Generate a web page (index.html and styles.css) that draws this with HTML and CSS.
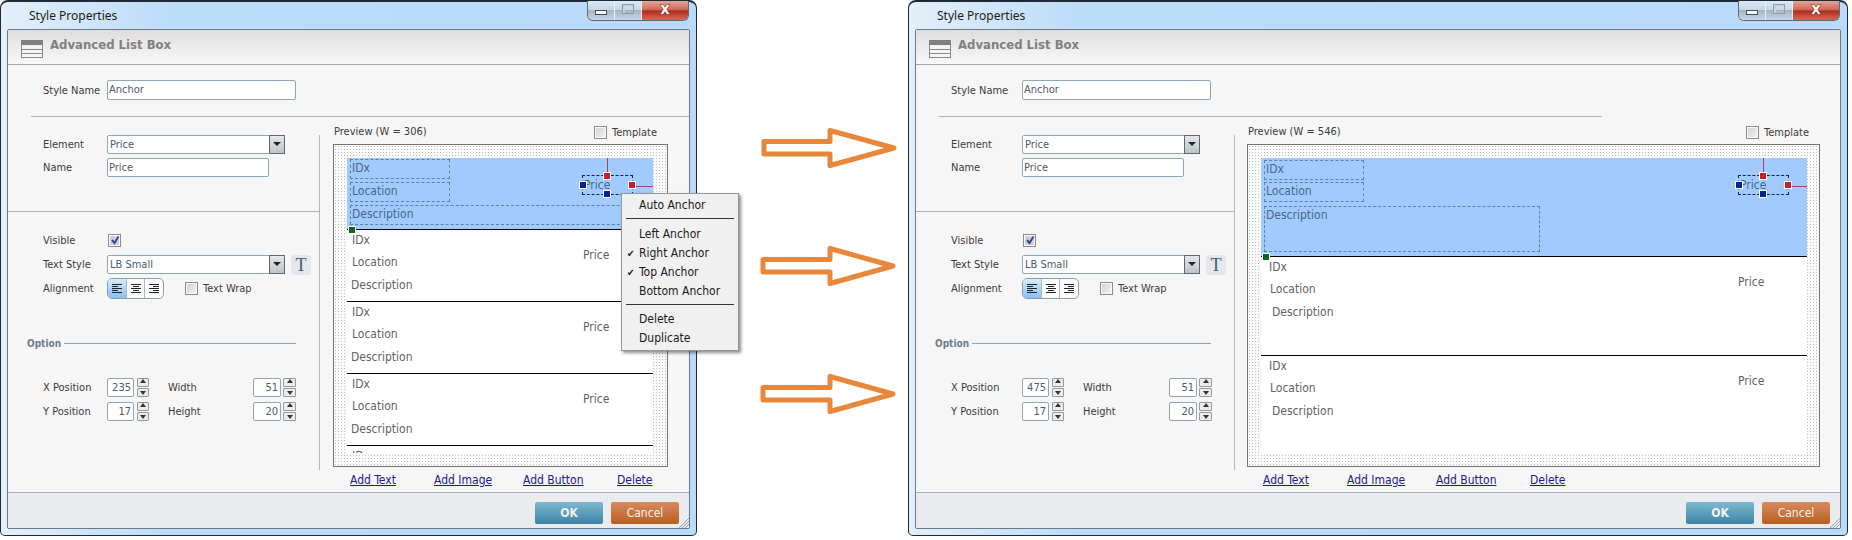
FILE: index.html
```html
<!DOCTYPE html>
<html lang="en">
<head>
    <meta charset="UTF-8">
    <title>Style Properties - Anchor</title>
    <link rel="stylesheet" href="styles.css">
</head>
<body>
    <svg class="defs" width="0" height="0">
        <symbol id="i-list" viewBox="0 0 22 18"><rect x="0.5" y="0.5" width="21" height="17" fill="#f4f4f4" stroke="#8a8a8a"/><rect x="0" y="0" width="22" height="5" fill="#808080"/><path d="M1 9.5h20M1 13.5h20" stroke="#8a8a8a"/></symbol>
        <symbol id="i-left" viewBox="0 0 12 11"><path d="M1 1.5h10M1 3.5h6M1 5.5h10M1 7.5h6M1 9.5h10" stroke="#222"/></symbol>
        <symbol id="i-center" viewBox="0 0 12 11"><path d="M1 1.5h10M3 3.5h6M1 5.5h10M3 7.5h6M1 9.5h10" stroke="#222"/></symbol>
        <symbol id="i-right" viewBox="0 0 12 11"><path d="M1 1.5h10M5 3.5h6M1 5.5h10M5 7.5h6M1 9.5h10" stroke="#222"/></symbol>
        <symbol id="i-tick" viewBox="0 0 12 12"><path d="M3 6l2.5 3L9.5 2.5" fill="none" stroke="#3a4a80" stroke-width="2"/></symbol>
        <symbol id="i-close" viewBox="0 0 12 11"><path d="M1 .5h3l2 2.6L8 .5h3L7.8 5.4 11 10.5H8L6 7.7 4 10.5H1l3.2-5.1z" fill="#fff" stroke="#7a2a20" stroke-width=".6"/></symbol>
        <symbol id="i-grip" viewBox="0 0 11 11"><path d="M1 11L11 1M4 11l7-7M7 11l4-4" stroke="#8fa3b3"/></symbol>
    </svg>

    <div class="page">
        <!-- before: preview 306 wide, context menu open -->
        <div class="window window-narrow">
            <div class="titlebar">
                <span class="title">Style Properties</span>
                <div class="caption-btns">
                    <span class="cap-btn cap-min"><i></i></span>
                    <span class="cap-btn cap-max"><i></i></span>
                    <span class="cap-btn cap-close"><svg width="12" height="11"><use href="#i-close"/></svg></span>
                </div>
            </div>
            <div class="panel">
                <div class="panel-head">
                    <svg class="head-icon" width="22" height="18"><use href="#i-list"/></svg>
                    <span class="head-text">Advanced List Box</span>
                </div>
                <div class="panel-body">
                    <div class="field style-name">
                        <label>Style Name</label>
                        <span class="input w-name">Anchor</span>
                    </div>
                    <div class="style-rule"></div>
                    <div class="columns">
                        <div class="form">
                            <div class="field">
                                <label>Element</label>
                                <span class="input select">Price<b class="drop"></b></span>
                            </div>
                            <div class="field mt4">
                                <label>Name</label>
                                <span class="input w-short">Price</span>
                            </div>
                            <div class="form-rule"></div>
                            <div class="field row-visible">
                                <label>Visible</label>
                                <span class="check checked"><svg width="12" height="12"><use href="#i-tick"/></svg></span>
                            </div>
                            <div class="field mt6">
                                <label>Text Style</label>
                                <span class="input select">LB Small<b class="drop"></b></span>
                                <span class="t-btn">T</span>
                            </div>
                            <div class="field mt4 row-align">
                                <label>Alignment</label>
                                <div class="align-group">
                                    <span class="align-seg active"><svg width="12" height="11"><use href="#i-left"/></svg></span>
                                    <span class="align-seg"><svg width="12" height="11"><use href="#i-center"/></svg></span>
                                    <span class="align-seg"><svg width="12" height="11"><use href="#i-right"/></svg></span>
                                </div>
                                <span class="check wrap-check"></span>
                                <span class="check-text">Text Wrap</span>
                            </div>
                            <div class="option">
                                <span class="option-text">Option</span>
                                <span class="option-line"></span>
                            </div>
                            <div class="field row-num">
                                <label>X Position</label>
                                <span class="input num">235</span>
                                <span class="spin"><b class="up"></b><b class="down"></b></span>
                                <label class="label-2">Width</label>
                                <span class="input num num-2">51</span>
                                <span class="spin spin-2"><b class="up"></b><b class="down"></b></span>
                            </div>
                            <div class="field mt5">
                                <label>Y Position</label>
                                <span class="input num">17</span>
                                <span class="spin"><b class="up"></b><b class="down"></b></span>
                                <label class="label-2">Height</label>
                                <span class="input num num-2">20</span>
                                <span class="spin spin-2"><b class="up"></b><b class="down"></b></span>
                            </div>
                        </div>
                        <div class="preview">
                            <div class="preview-head">
                                <span>Preview (W = 306)</span>
                                <div class="template"><span class="check"></span><span class="check-text">Template</span></div>
                            </div>
                            <div class="preview-box">
                                <div class="list">
                                    <div class="list-row selected">
                                        <span class="el el-idx box">IDx</span>
                                        <span class="el el-loc box">Location</span>
                                        <span class="el el-desc box">Description</span>
                                        <span class="el el-price sel">Price</span>
                                        <i class="anchor-top"></i><i class="anchor-right"></i>
                                        <i class="handle h-top"></i><i class="handle h-right"></i>
                                        <i class="handle h-left"></i><i class="handle h-bottom"></i>
                                        <i class="handle h-size"></i>
                                    </div>
                                    <div class="list-row">
                                        <span class="el el-idx">IDx</span><span class="el el-loc">Location</span>
                                        <span class="el el-desc">Description</span><span class="el el-price">Price</span>
                                    </div>
                                    <div class="list-row">
                                        <span class="el el-idx">IDx</span><span class="el el-loc">Location</span>
                                        <span class="el el-desc">Description</span><span class="el el-price">Price</span>
                                    </div>
                                    <div class="list-row">
                                        <span class="el el-idx">IDx</span><span class="el el-loc">Location</span>
                                        <span class="el el-desc">Description</span><span class="el el-price">Price</span>
                                    </div>
                                    <div class="list-row">
                                        <span class="el el-idx">IDx</span>
                                    </div>
                                </div>
                            </div>
                            <div class="links">
                                <a href="#">Add Text</a><a href="#">Add Image</a><a href="#">Add Button</a><a href="#">Delete</a>
                            </div>
                        </div>
                    </div>
                </div>
                <div class="panel-foot">
                    <span class="btn btn-ok">OK</span>
                    <span class="btn btn-cancel">Cancel</span>
                </div>
            </div>
            <svg class="grip" width="11" height="11"><use href="#i-grip"/></svg>

            <div class="menu">
                <div class="menu-item">Auto Anchor</div>
                <div class="menu-sep"></div>
                <div class="menu-item">Left Anchor</div>
                <div class="menu-item on">Right Anchor</div>
                <div class="menu-item on">Top Anchor</div>
                <div class="menu-item">Bottom Anchor</div>
                <div class="menu-sep sep-2"></div>
                <div class="menu-item">Delete</div>
                <div class="menu-item">Duplicate</div>
            </div>
        </div>

        <div class="arrows">
            <svg class="arrow" width="140" height="44"><path d="M5 15.5H71V4.5L135 22 71 39.5V28H5z"/></svg>
            <svg class="arrow" width="140" height="44"><path d="M4 15.5H71V4.5L134 22 71 39.5V28H4z"/></svg>
            <svg class="arrow" width="140" height="44"><path d="M4 15.5H71V4.5L134 22 71 39.5V28H4z"/></svg>
        </div>

        <!-- after: preview 546 wide -->
        <div class="window window-wide">
            <div class="titlebar">
                <span class="title">Style Properties</span>
                <div class="caption-btns">
                    <span class="cap-btn cap-min"><i></i></span>
                    <span class="cap-btn cap-max"><i></i></span>
                    <span class="cap-btn cap-close"><svg width="12" height="11"><use href="#i-close"/></svg></span>
                </div>
            </div>
            <div class="panel">
                <div class="panel-head">
                    <svg class="head-icon" width="22" height="18"><use href="#i-list"/></svg>
                    <span class="head-text">Advanced List Box</span>
                </div>
                <div class="panel-body">
                    <div class="field style-name">
                        <label>Style Name</label>
                        <span class="input w-name">Anchor</span>
                    </div>
                    <div class="style-rule"></div>
                    <div class="columns">
                        <div class="form">
                            <div class="field">
                                <label>Element</label>
                                <span class="input select">Price<b class="drop"></b></span>
                            </div>
                            <div class="field mt4">
                                <label>Name</label>
                                <span class="input w-short">Price</span>
                            </div>
                            <div class="form-rule"></div>
                            <div class="field row-visible">
                                <label>Visible</label>
                                <span class="check checked"><svg width="12" height="12"><use href="#i-tick"/></svg></span>
                            </div>
                            <div class="field mt6">
                                <label>Text Style</label>
                                <span class="input select">LB Small<b class="drop"></b></span>
                                <span class="t-btn">T</span>
                            </div>
                            <div class="field mt4 row-align">
                                <label>Alignment</label>
                                <div class="align-group">
                                    <span class="align-seg active"><svg width="12" height="11"><use href="#i-left"/></svg></span>
                                    <span class="align-seg"><svg width="12" height="11"><use href="#i-center"/></svg></span>
                                    <span class="align-seg"><svg width="12" height="11"><use href="#i-right"/></svg></span>
                                </div>
                                <span class="check wrap-check"></span>
                                <span class="check-text">Text Wrap</span>
                            </div>
                            <div class="option">
                                <span class="option-text">Option</span>
                                <span class="option-line"></span>
                            </div>
                            <div class="field row-num">
                                <label>X Position</label>
                                <span class="input num">475</span>
                                <span class="spin"><b class="up"></b><b class="down"></b></span>
                                <label class="label-2">Width</label>
                                <span class="input num num-2">51</span>
                                <span class="spin spin-2"><b class="up"></b><b class="down"></b></span>
                            </div>
                            <div class="field mt5">
                                <label>Y Position</label>
                                <span class="input num">17</span>
                                <span class="spin"><b class="up"></b><b class="down"></b></span>
                                <label class="label-2">Height</label>
                                <span class="input num num-2">20</span>
                                <span class="spin spin-2"><b class="up"></b><b class="down"></b></span>
                            </div>
                        </div>
                        <div class="preview">
                            <div class="preview-head">
                                <span>Preview (W = 546)</span>
                                <div class="template"><span class="check"></span><span class="check-text">Template</span></div>
                            </div>
                            <div class="preview-box">
                                <div class="list">
                                    <div class="list-row selected">
                                        <span class="el el-idx box">IDx</span>
                                        <span class="el el-loc box">Location</span>
                                        <span class="el el-desc box">Description</span>
                                        <span class="el el-price sel">Price</span>
                                        <i class="anchor-top"></i><i class="anchor-right"></i>
                                        <i class="handle h-top"></i><i class="handle h-right"></i>
                                        <i class="handle h-left"></i><i class="handle h-bottom"></i>
                                        <i class="handle h-size"></i>
                                    </div>
                                    <div class="list-row">
                                        <span class="el el-idx">IDx</span><span class="el el-loc">Location</span>
                                        <span class="el el-desc">Description</span><span class="el el-price">Price</span>
                                    </div>
                                    <div class="list-row">
                                        <span class="el el-idx">IDx</span><span class="el el-loc">Location</span>
                                        <span class="el el-desc">Description</span><span class="el el-price">Price</span>
                                    </div>
                                </div>
                            </div>
                            <div class="links">
                                <a href="#">Add Text</a><a href="#">Add Image</a><a href="#">Add Button</a><a href="#">Delete</a>
                            </div>
                        </div>
                    </div>
                </div>
                <div class="panel-foot">
                    <span class="btn btn-ok">OK</span>
                    <span class="btn btn-cancel">Cancel</span>
                </div>
            </div>
            <svg class="grip" width="11" height="11"><use href="#i-grip"/></svg>
        </div>
    </div>
</body>
</html>
```

FILE: styles.css
```css
* { margin: 0; padding: 0; box-sizing: border-box; }

body {
    background: #fff;
    color: #3c3c3c;
    font-family: "DejaVu Sans", sans-serif;
    font-stretch: condensed;
    font-size: 11px;
}

.defs { position: absolute; }

.page {
    display: flex;
    align-items: flex-start;
    width: 1852px;
    height: 540px;
    overflow: hidden;
}

/* window frame */
.window {
    position: relative;
    display: flex;
    flex-direction: column;
    flex: none;
    height: 536px;
    padding: 0 6px 6px;
    background: linear-gradient(90deg, #e3effa 0, #bcdcf8 170px, #b9daf9 100%);
    border: 1px solid #1d2a36;
    border-width: 2px 1px 1px;
    border-radius: 8px 8px 5px 5px;
}

.window-narrow {
    --label-w: 63px;
    --form-w: 312px;
    --list-w: 306px;
    --row-h: 72px;
    width: 697px;
}

.window-wide {
    --label-w: 70px;
    --form-w: 319px;
    --list-w: 546px;
    --row-h: 99px;
    width: 940px;
}

.titlebar {
    display: flex;
    justify-content: space-between;
    height: 27px;
    flex: none;
}

.title {
    margin: 5px 0 0 22px;
    font-family: "Noto Sans", sans-serif;
    font-stretch: normal;
    font-size: 12px;
    color: #1c1c1c;
}

.caption-btns {
    display: flex;
    height: 20px;
    margin-right: 1px;
    margin-top: -1px;
    border: 1px solid #5b6b7a;
    border-top: 0;
    border-radius: 0 0 6px 6px;
    overflow: hidden;
}

.cap-btn {
    display: flex;
    align-items: center;
    justify-content: center;
}

.cap-min, .cap-max {
    width: 27px;
    background: linear-gradient(#dce9f6 0, #c9d7e5 45%, #a6b5c4 50%, #c6d6e6 100%);
    border-right: 1px solid #eaf2fa;
}

.cap-min i {
    display: block;
    width: 12px;
    height: 5px;
    margin-top: 4px;
    background: #fff;
    border: 1px solid #3f4b58;
}

.cap-max i {
    display: block;
    width: 12px;
    height: 10px;
    margin-bottom: 3px;
    border: 1px solid #8b9cac;
    box-shadow: inset 2px 2px 0 #c5d3e0;
}

.cap-close {
    width: 46px;
    background: linear-gradient(#e3a597 0, #cf6a58 45%, #b02d1e 52%, #d56a55 100%);
}

.cap-close svg { margin-bottom: 2px; }

/* inner panel */
.panel {
    flex: 1;
    display: flex;
    flex-direction: column;
    min-height: 0;
    background: #f6f6f6;
    border: 1px solid #6b7b88;
    border-radius: 2px;
}

.panel-head {
    display: flex;
    align-items: center;
    flex: none;
    height: 35px;
    padding-left: 13px;
    background: linear-gradient(#dedede, #f8f8f8);
    border-bottom: 1px solid #a6a6a6;
}

.head-icon { margin-top: 3px; }

.head-text {
    margin: -5px 0 0 7px;
    font-family: "DejaVu Sans", sans-serif;
    font-size: 13px;
    font-weight: bold;
    color: #808080;
}

.panel-body {
    flex: 1;
    min-height: 0;
}

.panel-foot {
    display: flex;
    justify-content: flex-end;
    gap: 8px;
    flex: none;
    height: 36px;
    padding: 9px 10px 0 0;
    background: #e9ebee;
    border-top: 1px solid #9fb0bd;
}

.btn {
    width: 68px;
    height: 22px;
    line-height: 22px;
    text-align: center;
    color: #f2f2f2;
    font-size: 12px;
    font-weight: bold;
    border-radius: 2px;
}

.btn-ok { background: linear-gradient(#7fbacf, #3b83a6); }

.btn-cancel {
    background: linear-gradient(#d98a5f, #b85e20);
    font-weight: normal;
}

/* form */
.field {
    display: flex;
    align-items: center;
    height: 19px;
    margin-left: 35px;
}

.field label {
    flex: none;
    width: calc(var(--label-w) + 1px);
    color: #3a3a3a;
}

.style-name {
    height: 20px;
    margin-top: 15px;
}

.style-rule {
    width: 663px;
    max-width: calc(100% - 23px);
    height: 1px;
    margin: 16px 0 0 23px;
    background: #a9b2b9;
}

.columns { display: flex; }

.form {
    flex: none;
    width: var(--form-w);
    height: 335px;
    margin-top: 18px;
    border-right: 1px solid #b4b8bb;
}

.mt4 { margin-top: 4px; }
.mt5 { margin-top: 5px; }
.mt6 { margin-top: 6px; }

.input {
    position: relative;
    display: block;
    height: 100%;
    padding-left: 2px;
    line-height: 17px;
    color: #4d5a68;
    background: #fff;
    border: 1px solid #8fa6b4;
    border-radius: 2px;
}

.w-name { width: 189px; padding-left: 1px; }
.w-short { width: 162px; padding-left: 1px; }
.select { width: 178px; }

.drop {
    position: absolute;
    top: -1px;
    right: -1px;
    bottom: -1px;
    width: 16px;
    background: linear-gradient(#e4e6e8, #bfc4c8);
    border: 1px solid #5f6b72;
}

.drop::after {
    content: "";
    position: absolute;
    top: 6px;
    left: 3px;
    border: 4px solid transparent;
    border-top: 4px solid #222;
    border-bottom: 0;
}

.form-rule {
    height: 1px;
    margin-top: 34px;
    background: #a9b2b9;
}

.row-visible {
    height: 18px;
    margin-top: 19px;
}

.check {
    display: block;
    flex: none;
    width: 13px;
    height: 13px;
    margin-left: 1px;
    background: linear-gradient(135deg, #cfcfcf, #f6f6f6);
    border: 1px solid #8c8c8c;
    box-shadow: inset 0 0 0 1px #fafafa;
}

.check svg { display: block; margin: -0.5px 0 0 -0.5px; }
.check.checked { background: #c9d0e2; }

.check-text { margin-left: 5px; }

.t-btn {
    flex: none;
    width: 20px;
    height: 20px;
    margin-left: 6px;
    font-family: "Liberation Serif", serif;
    font-stretch: normal;
    font-size: 18px;
    line-height: 21px;
    text-align: center;
    color: #4c5c72;
    background: #e4e7ee;
    border-radius: 3px;
}

.row-align { height: 21px; }

.align-group {
    display: flex;
    flex: none;
    width: 57px;
    height: 21px;
    background: #fbfbfb;
    border: 1px solid #8aa0ae;
    border-radius: 5px;
    overflow: hidden;
}

.align-seg {
    display: flex;
    align-items: center;
    justify-content: center;
    flex: 1;
    border-right: 1px solid #a9bac5;
}

.align-seg:last-child { border-right: 0; }
.align-seg.active { background: linear-gradient(#d9ecfc, #86c0f0); }

.wrap-check { margin-left: 21px; }

.option {
    display: flex;
    align-items: center;
    height: 16px;
    margin: 36px 0 0 19px;
}

.option-text {
    width: 37px;
    font-size: 10px;
    font-weight: bold;
    color: #6c7d8e;
}

.option-line {
    width: calc(var(--label-w) + 169px);
    height: 1px;
    background: #93a3b2;
}

.row-num { margin-top: 27px; }

.num {
    flex: none;
    width: 27px;
    padding: 0 2px 0 0;
    text-align: right;
}

.num-2 { width: 28px; }

.spin {
    display: flex;
    flex-direction: column;
    gap: 1px;
    flex: none;
    width: 12px;
    height: 19px;
    margin-left: 3px;
}

.spin-2 {
    width: 13px;
    margin-left: 2px;
}

.spin b {
    position: relative;
    flex: 1;
    background: #ececec;
    border: 1px solid #9a9a9a;
    border-radius: 1px;
}

.spin b::after {
    content: "";
    position: absolute;
    left: 50%;
    top: 2px;
    margin-left: -3px;
    border: 3px solid transparent;
}

.spin .up::after {
    top: 0;
    border-top: 0;
    border-bottom: 4px solid #333;
}

.spin .down::after {
    top: 2px;
    border-bottom: 0;
    border-top: 4px solid #333;
}

.label-2 {
    margin-left: 19px;
}

.field .label-2 { width: 85px; }
.window-wide .field .label-2 { width: 86px; }

/* preview side */
.preview {
    flex: 1;
    padding: 8px 21px 0 13px;
}

.window-wide .preview { padding: 8px 20px 0 12px; }

.preview-head {
    display: flex;
    justify-content: space-between;
    height: 14px;
    padding: 0 11px 0 1px;
    color: #3a3a3a;
}

.template {
    display: flex;
    align-items: center;
    margin-top: 1px;
}

.preview-box {
    height: 323px;
    margin-top: 5px;
    padding: 13px 0 0 13px;
    background: radial-gradient(#bfbfbf 1px, #fafafa 1px) 0 0 / 3px 3px;
    border: 1px solid #747474;
}

.list {
    width: var(--list-w);
    height: 295px;
    overflow: hidden;
    background: #fff;
    font-size: 12px;
    color: #636363;
}

.list-row {
    position: relative;
    height: var(--row-h);
    border-bottom: 1px solid #000;
}

.list-row.selected {
    background: #a2cbfd;
    color: #46678c;
}

/* row elements sit on a free canvas at their X / Y position */
.el {
    position: absolute;
    line-height: 18px;
    white-space: nowrap;
}

.el-idx { left: 5px; top: 1px; }
.el-loc { left: 5px; top: 23px; }
.el-desc { left: 4px; top: 46px; }
.el-price { left: 236px; top: 16px; }

.window-wide .el-idx { left: 8px; }
.window-wide .el-loc { left: 9px; }
.window-wide .el-desc { left: 11px; }
.window-wide .el-price { left: 477px; }

.el.box {
    left: 3px;
    width: 100px;
    height: 20px;
    padding-left: 1px;
    line-height: 16px;
    border: 1px dashed #5f80aa;
}

.el-idx.box { top: 1px; }
.el-loc.box { top: 24px; }
.el-desc.box { top: 47px; }

.window-narrow .el-desc.box { width: 300px; }

.window-wide .el-idx.box { top: 2px; }
.window-wide .el-desc.box {
    top: 48px;
    width: 276px;
    height: 46px;
}

.el.sel {
    left: 235px;
    top: 17px;
    width: 51px;
    height: 20px;
    padding-left: 1px;
    border: 1px dashed #13224f;
}

.window-wide .el.sel { left: 477px; }

.handle {
    position: absolute;
    width: 8px;
    height: 8px;
    border: 1px solid #fff;
    --x: 235px;
}

.window-wide .handle { --x: 477px; }

.h-top { left: calc(var(--x) + 21px); top: 14px; background: #cc1c2c; }
.h-right { left: calc(var(--x) + 46px); top: 23px; background: #cc1c2c; }
.h-left { left: calc(var(--x) - 3px); top: 23px; background: #0a1f9a; }
.h-bottom { left: calc(var(--x) + 21px); top: 32px; background: #0a1f9a; }
.h-size { left: 1px; bottom: -5px; background: #0d6a1c; z-index: 1; }

.anchor-top {
    position: absolute;
    left: calc(var(--ax, 235px) + 25px);
    top: 0;
    width: 1px;
    height: 17px;
    background: #a2445c;
}

.anchor-right {
    position: absolute;
    left: calc(var(--ax, 235px) + 50px);
    right: 0;
    top: 28px;
    height: 1px;
    background: #a2445c;
}

.window-wide .anchor-top, .window-wide .anchor-right { --ax: 477px; }

.links {
    display: grid;
    grid-template-columns: 84px 89px 94px auto;
    height: 16px;
    margin: 5px 0 0 17px;
    font-size: 12px;
    line-height: 16px;
}

.window-wide .links { margin-left: 16px; }

.links a {
    color: #1b1b8a;
    text-decoration: underline;
}

.grip {
    position: absolute;
    right: 7px;
    bottom: 7px;
}

/* context menu */
.menu {
    position: absolute;
    left: 620px;
    top: 191px;
    width: 118px;
    height: 158px;
    padding-top: 2px;
    background: #f0f0f0;
    border: 1px solid #979797;
    box-shadow: 2px 2px 3px rgba(0, 0, 0, 0.45);
    color: #1a1a1a;
    font-size: 12px;
}

.menu-item {
    position: relative;
    height: 19px;
    padding-left: 17px;
    line-height: 19px;
}

.menu-item.on::before {
    content: "\2714";
    position: absolute;
    left: 5px;
    font-size: 10px;
    font-weight: bold;
}

.menu-sep {
    height: 1px;
    margin: 3px 4px 6px;
    background: #333;
}

.sep-2 { margin-bottom: 5px; }

/* arrows between the two windows */
.arrows {
    display: flex;
    flex-direction: column;
    flex: none;
    width: 211px;
    padding: 126px 0 0 62px;
}

.arrow {
    display: block;
    flex: none;
    margin-bottom: 74px;
}

.arrow:nth-child(2) { margin-bottom: 84px; }

.arrow path {
    fill: #fff;
    stroke: #e8873a;
    stroke-width: 5;
    stroke-linejoin: round;
}
```
